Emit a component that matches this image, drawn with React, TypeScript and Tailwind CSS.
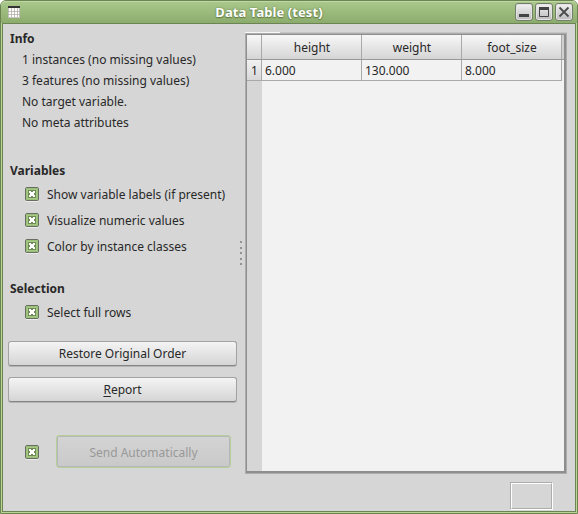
import React from "react";

function CheckMark() {
  return (
    <svg width="14" height="15" viewBox="0 0 14 15" className="block shrink-0">
      <rect x="1" y="14" width="12" height="1" fill="#ececec" />
      <rect x="0.5" y="0.5" width="13" height="13" rx="1.5" fill="#a5c983" stroke="#686d64" />
      <rect x="1.5" y="1.5" width="11" height="11" fill="none" stroke="#9cc07a" />
      <rect x="3" y="3" width="8" height="8" fill="#6f8b55" />
      <path d="M4 4h2v1h2v-1h2v2h-1v2h1v2h-2v-1h-2v1h-2v-2h1v-2h-1z" fill="#fff" />
    </svg>
  );
}

function CheckRow({ label }: { label: string }) {
  return (
    <div className="flex h-[26px] items-start gap-2 pl-[22px] pt-[1px]">
      <div className="pt-[5px]">
        <CheckMark />
      </div>
      <span className="leading-[26px]">{label}</span>
    </div>
  );
}

function Heading({ children }: { children: React.ReactNode }) {
  return <div className="h-[21px] pl-[7px] font-bold leading-[21px]">{children}</div>;
}

function PushButton({ children }: { children: React.ReactNode }) {
  return (
    <button className="block h-[25px] w-[229px] rounded-[3px] border border-[#a2a2a2] border-b-[#858585] bg-linear-to-b from-[#f4f4f4] to-[#d5d5d5] text-center leading-[23px] shadow-[0_1px_0_#b4b4b4]">
      {children}
    </button>
  );
}

function WindowButton({ children }: { children: React.ReactNode }) {
  return (
    <button className="h-[18px] w-[18px] rounded-[3px] border border-[#737e69] bg-linear-to-b from-[#f2f2f2] to-[#bcbcbc] shadow-[inset_0_0_0_1px_#e3e3e3]">
      <svg width="16" height="16" viewBox="0 0 16 16" className="block">
        {children}
      </svg>
    </button>
  );
}

const columns = [
  { name: "height", value: "6.000" },
  { name: "weight", value: "130.000" },
  { name: "foot_size", value: "8.000" },
];

export default function App() {
  return (
    <div className="h-[514px] w-[578px] overflow-hidden bg-white font-['Noto_Sans',sans-serif] text-[12px] text-[#282828]">
      <div className="flex h-full flex-col rounded-t-[6px] border border-[#6c8354] bg-[#b6d692]">
        <header className="flex h-[22px] shrink-0 items-start rounded-t-[5px] border-t border-[#bfd9a3] bg-linear-to-b from-[#a9c78b] to-[#8cac6d] pl-[7px] pr-[4px] pt-px">
          <svg width="12" height="12" viewBox="0 0 12 12" className="mt-[3px] block shrink-0">
            <rect width="12" height="12" fill="#fff" />
            <rect width="12" height="2" fill="#333" />
            <path d="M.5 2v9.500h11V2M3.500 2v9M6.500 2v9M9.500 2v9M0 5.500h12M0 8.500h12" fill="none" stroke="#aaa89f" strokeWidth=".7" />
          </svg>
          <h1 className="flex-1 pl-[3px] text-center text-[13px] font-bold leading-[18px] tracking-[0.08px] text-white [text-shadow:0_0_2px_#5f7d42,0_1px_1px_#5f7d42]">
            Data Table (test)
          </h1>
          <div className="flex gap-[2px]">
            <WindowButton>
              <path d="M3 10h10v3H3z" fill="#444" />
            </WindowButton>
            <WindowButton>
              <path d="M3.500 4v8.500h9V4" fill="none" stroke="#444" />
              <path d="M3 3h10v3H3z" fill="#444" />
            </WindowButton>
            <WindowButton>
              <path d="M3.500 3.500l9 9M12.500 3.500l-9 9" fill="none" stroke="#4c4c4c" strokeWidth="1.8" />
            </WindowButton>
          </div>
        </header>
        <div className="mx-[1px] mb-[1px] flex min-h-0 flex-1 border border-[#6c8354] bg-[#d6d6d6]">
          <aside className="w-[235px] shrink-0 pt-[4px]">
            <Heading>Info</Heading>
            <div className="pl-[19px] leading-[21px]">
              <p>1 instances (no missing values)</p>
              <p>3 features (no missing values)</p>
              <p>No target variable.</p>
              <p>No meta attributes</p>
            </div>
            <div className="h-[27px]" />
            <Heading>Variables</Heading>
            <CheckRow label="Show variable labels (if present)" />
            <CheckRow label="Visualize numeric values" />
            <CheckRow label="Color by instance classes" />
            <div className="h-[19px]" />
            <Heading>Selection</Heading>
            <CheckRow label="Select full rows" />
            <div className="flex flex-col gap-[11px] pl-[5px] pt-[16px]">
              <PushButton>Restore Original Order</PushButton>
              <PushButton>
                <span className="underline underline-offset-2">R</span>eport
              </PushButton>
            </div>
            <div className="flex items-start pl-[22px] pt-[33px]">
              <div className="pt-[10px]">
                <CheckMark />
              </div>
              <button className="ml-[17px] h-[33px] w-[175px] rounded-[3px] border border-[#b5cf9b] bg-linear-to-b from-[#d4d4d4] to-[#c9c9c9] pt-px text-center leading-[31px] text-[#999] shadow-[inset_0_0_0_1px_#b7b7b7]">
                Send Automatically
              </button>
            </div>
          </aside>
          <div className="flex w-[7px] shrink-0 flex-col gap-[3.5px] pl-[2px] pt-[217px]">
            {[0, 1, 2, 3, 4].map((n) => (
              <i key={n} className="block h-[2px] w-[2px] shrink-0 bg-[#929292]" />
            ))}
          </div>
          <main className="flex w-[322px] shrink-0 flex-col">
            <div className="mt-[8px] flex h-px shrink-0">
              <div className="w-[35px] bg-[#f7f7f7]" />
              <div className="flex-1 bg-[#c4c4c4]" />
            </div>
            <div className="h-[441px] shrink-0 border border-[#acacac]">
              <div className="flex h-full flex-col border border-b-2 border-r-2 border-[#8e8e8e] bg-[#f2f2f2]">
                <div className="flex h-[25px] shrink-0 border-b border-[#999] bg-linear-to-b from-[#f7f7f7] to-[#d5d5d5]">
                  <div className="w-[15px] border-r border-[#a9a9a9]" />
                  {columns.map((c) => (
                    <div key={c.name} className="w-[100px] border-r border-[#a9a9a9] pl-px text-center leading-[26px]">
                      {c.name}
                    </div>
                  ))}
                  <div className="flex-1 bg-[#d0d0d0]" />
                </div>
                <div className="flex h-[21px] shrink-0">
                  <div className="w-[15px] border-b border-r border-[#a9a9a9] bg-linear-to-b from-[#f2f2f2] to-[#d8d8d8] pl-px text-center leading-[22px]">1</div>
                  {columns.map((c) => (
                    <div key={c.name} className="w-[100px] border-b border-r border-[#a9a9a9] pl-[3px] leading-[22px]">
                      {c.value}
                    </div>
                  ))}
                </div>
                <div className="w-[15px] flex-1 bg-[#d6d6d6]" />
              </div>
            </div>
            <div className="mr-[14px] mt-[8px] h-[28px] w-[43px] shrink-0 self-end border border-[#adadad] border-b-white border-r-white">
              <div className="h-full border border-white border-b-[#adadad] border-r-[#adadad]" />
            </div>
          </main>
        </div>
      </div>
    </div>
  );
}
